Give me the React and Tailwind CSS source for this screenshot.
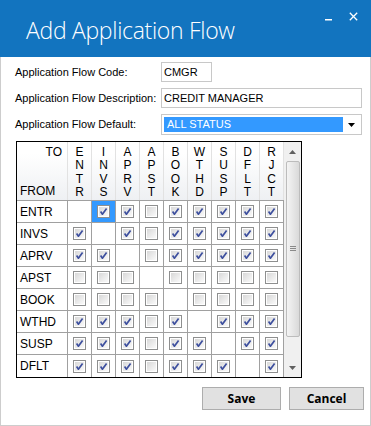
import React from "react";

const COLS = ["ENTR", "INVS", "APRV", "APST", "BOOK", "WTHD", "SUSP", "DFLT", "RJCT"];
const ROWS = [
  ["ENTR", [null, 1, 1, 0, 1, 1, 1, 1, 1]],
  ["INVS", [1, null, 1, 0, 1, 1, 1, 1, 1]],
  ["APRV", [1, 1, null, 0, 1, 1, 1, 1, 1]],
  ["APST", [0, 0, 0, null, 0, 0, 0, 0, 0]],
  ["BOOK", [0, 0, 0, 0, null, 0, 0, 0, 0]],
  ["WTHD", [1, 1, 1, 0, 1, null, 1, 1, 1]],
  ["SUSP", [1, 1, 1, 0, 1, 1, null, 1, 1]],
  ["DFLT", [1, 1, 1, 0, 1, 1, 1, null, 1]],
];

function Box({ checked }) {
  return (
    <svg width="13" height="13" viewBox="0 0 13 13">
      <rect x="0.5" y="0.5" width="12" height="12" fill="#ffffff" stroke="#8e8f8f" />
      <rect x="2" y="2" width="9" height="9" fill="url(#cbg)" />
      {checked ? (
        <path d="M3.6 6.6 L5.4 9.2 L9.6 3.4" stroke="#3d4f9e" strokeWidth="1.7" fill="none" strokeLinejoin="round" />
      ) : null}
    </svg>
  );
}

export default function App() {
  const font = { fontFamily: '"Liberation Sans", Arial, sans-serif' };
  return (
    <div className="w-[371px] h-[426px] flex flex-col bg-white" style={font}>
      <svg width="0" height="0" className="absolute">
        <defs>
          <linearGradient id="cbg" x1="0" y1="0" x2="1" y2="1">
            <stop offset="0" stopColor="#d8d8d8" />
            <stop offset="1" stopColor="#fafafa" />
          </linearGradient>
        </defs>
      </svg>
      {/* Title bar */}
      <div className="h-[57px] bg-[#1274bf] flex justify-between shrink-0">
        <div
          className="pl-[26px] pt-[16px] text-[23px] leading-[28px] tracking-[-0.3px] text-white font-light"
          style={{ fontFamily: '"Open Sans", "Noto Sans", sans-serif' }}
        >
          Add Application Flow
        </div>
        <div className="flex items-start gap-[17px] pt-[12px] pr-[13px]">
          <svg width="7" height="9" viewBox="0 0 7 9">
            <rect x="0" y="7" width="7" height="1.5" fill="#fff" />
          </svg>
          <svg width="9" height="9" viewBox="0 0 9 9">
            <path d="M0.8 0.8 L8.2 8.2 M8.2 0.8 L0.8 8.2" stroke="#fff" strokeWidth="1.3" />
          </svg>
        </div>
      </div>

      {/* Body */}
      <div className="flex-1 border-x border-b border-[#cdcdcd] flex flex-col pl-[14px] pr-[6px] pt-[5px]">
        <div className="grid grid-cols-[146px_200px] gap-y-[6px] text-[11px] text-black">
          <div className="flex items-center">Application Flow Code:</div>
          <div className="h-[20px] w-[51px] border border-[#c8c8c8] flex items-center pl-[2px]">CMGR</div>
          <div className="flex items-center">Application Flow Description:</div>
          <div className="h-[20px] w-[201px] border border-[#c8c8c8] flex items-center pl-[2px]">CREDIT MANAGER</div>
          <div className="flex items-center">Application Flow Default:</div>
          <div className="h-[21px] w-[201px] border border-[#c8c8c8] flex items-center p-[2px]">
            <div className="h-full w-[179px] bg-[#3399ff] text-white flex items-center pl-[3px]">ALL STATUS</div>
            <div className="flex-1 flex justify-center">
              <svg width="7" height="4" viewBox="0 0 7 4">
                <path d="M0 0 H7 L3.5 4 Z" fill="#000" />
              </svg>
            </div>
          </div>
        </div>

        {/* Grid */}
        <div className="mt-[6px] ml-[1px] w-[286px] border border-black flex">
          <div className="flex flex-col w-[267px]">
            {/* Header */}
            <div className="h-[59px] flex border-b border-[#a0a0a0] bg-gradient-to-b from-white from-[20%] to-[#eef0f3] text-[12px] leading-[13.4px]">
              <div className="w-[51px] border-r border-[#e2e2e2] flex flex-col justify-between pt-[4px] pb-[2px] pl-[3px] pr-[5px]">
                <div className="text-right">TO</div>
                <div>FROM</div>
              </div>
              {COLS.map((c) => (
                <div key={c} className="w-[24px] border-r border-[#e2e2e2] flex flex-col items-center pt-[4px]">
                  {c.split("").map((ch, i) => (
                    <div key={i}>{ch}</div>
                  ))}
                </div>
              ))}
            </div>
            {/* Rows */}
            {ROWS.map(([name, vals], r) => (
              <div key={name} className={"h-[22px] flex " + (r < ROWS.length - 1 ? "border-b border-[#a0a0a0]" : "")}>
                <div className="w-[51px] border-r border-[#a0a0a0] flex items-center pl-[3px] text-[12px]">{name}</div>
                {vals.map((v, i) => (
                  <div
                    key={i}
                    className={
                      "w-[24px] border-r border-[#a0a0a0] flex items-center justify-center " +
                      (r === 0 && i === 1 ? "bg-[#3399ff]" : "")
                    }
                  >
                    {v === null ? null : <Box checked={v === 1} />}
                  </div>
                ))}
              </div>
            ))}
          </div>
          {/* Scrollbar */}
          <div className="w-[17px] bg-[#f0f0f0] flex flex-col items-center">
            <div className="h-[19px] w-full flex items-center justify-center">
              <svg width="7" height="4" viewBox="0 0 7 4">
                <path d="M0 4 H7 L3.5 0 Z" fill="#606060" />
              </svg>
            </div>
            <div className="h-[176px] w-[14px] rounded-[2px] border border-[#bcbcbc] bg-gradient-to-r from-[#f4f4f4] to-[#d9d9d9] flex items-center justify-center">
              <svg width="6" height="6" viewBox="0 0 6 6">
                <path d="M0 0.5 H6 M0 2.5 H6 M0 4.5 H6" stroke="#8a8a8a" strokeWidth="1" />
              </svg>
            </div>
            <div className="flex-1 w-full flex items-end justify-center pb-[7px]">
              <svg width="7" height="4" viewBox="0 0 7 4">
                <path d="M0 0 H7 L3.5 4 Z" fill="#606060" />
              </svg>
            </div>
          </div>
        </div>

        {/* Buttons */}
        <div className="mt-[9px] flex justify-end gap-[8px]">
          <button
            className="w-[79px] h-[23px] bg-[#e1e1e1] border border-[#adadad] text-[12px] font-bold text-black"
            style={{ fontFamily: '"Open Sans", "Noto Sans", sans-serif' }}
          >
            Save
          </button>
          <button
            className="w-[75px] h-[23px] bg-[#e1e1e1] border border-[#adadad] text-[12px] font-bold text-black"
            style={{ fontFamily: '"Open Sans", "Noto Sans", sans-serif' }}
          >
            Cancel
          </button>
        </div>
      </div>
    </div>
  );
}
